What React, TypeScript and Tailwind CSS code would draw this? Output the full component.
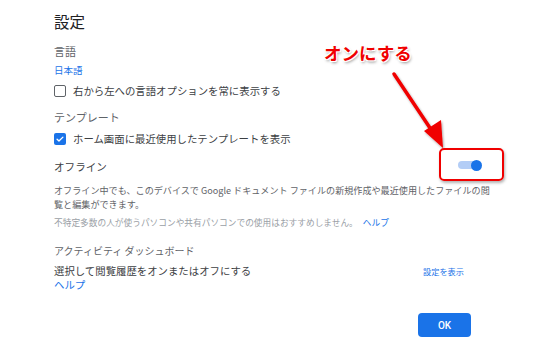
import React from 'react';

function CheckBox({ checked }: { checked: boolean }) {
  if (checked) {
    return (
      <span className="w-[12px] h-[12px] rounded-[2px] bg-[#1a73e8] flex items-center justify-center shrink-0">
        <svg width="10" height="10" viewBox="0 0 24 24" fill="none">
          <path d="M5 12.5l4.5 4.5L19 7.5" stroke="#fff" strokeWidth="3.2" strokeLinecap="round" strokeLinejoin="round" />
        </svg>
      </span>
    );
  }
  return <span className="w-[12px] h-[12px] rounded-[2px] border-[1.6px] border-[#5f6368] shrink-0" />;
}

export default function App() {
  return (
    <div className="relative w-[549px] h-[350px] bg-white overflow-hidden font-['Noto_Sans_CJK_JP','Noto_Sans',sans-serif] text-[#3c4043]">
      <div className="pl-[54px] pt-[11px]">
        <h1 className="text-[15.5px] leading-[20px] text-[#202124]">設定</h1>

        {/* 言語 */}
        <div className="mt-[13px] text-[11px] leading-[14px] text-[#5f6368]">言語</div>
        <div className="mt-[6px] text-[9.5px] leading-[12px] text-[#1a73e8]">日本語</div>
        <div className="mt-[8px] h-[14px] flex items-center gap-[7px]">
          <CheckBox checked={false} />
          <span className="text-[10.4px] leading-[14px] text-[#3c4043] whitespace-nowrap">右から左への言語オプションを常に表示する</span>
        </div>

        {/* テンプレート */}
        <div className="mt-[12px] text-[11px] leading-[14px] text-[#5f6368]">テンプレート</div>
        <div className="mt-[8px] h-[14px] flex items-center gap-[7px]">
          <CheckBox checked={true} />
          <span className="text-[10.4px] leading-[14px] text-[#3c4043] whitespace-nowrap">ホーム画面に最近使用したテンプレートを表示</span>
        </div>

        {/* オフライン */}
        <div className="mt-[13px] h-[16px] w-[428px] flex items-center justify-between">
          <span className="text-[10.6px] leading-[16px] text-[#3c4043]">オフライン</span>
          <span className="relative w-[24px] h-[12px] flex items-center -mt-[4px]">
            <span className="w-[21px] h-[8px] rounded-full bg-[#b3cdf6]" />
            <span className="absolute right-0 w-[11px] h-[11px] rounded-full bg-[#1a73e8]" />
          </span>
        </div>
        <p className="mt-[8px] text-[9.1px] leading-[14px] text-[#5f6368] whitespace-nowrap">
          オフライン中でも、このデバイスで Google ドキュメント ファイルの新規作成や最近使用したファイルの閲
          <br />
          覧と編集ができます。
        </p>
        <p className="mt-[5px] text-[8.7px] leading-[14px] text-[#9aa0a6] whitespace-nowrap">
          不特定多数の人が使うパソコンや共有パソコンでの使用はおすすめしません。
          <span className="ml-[5px] text-[#1a73e8]">ヘルプ</span>
        </p>

        {/* アクティビティ ダッシュボード */}
        <div className="mt-[14px] text-[10px] leading-[14px] text-[#5f6368] whitespace-nowrap">アクティビティ ダッシュボード</div>
        <div className="mt-[6px] w-[410px] flex items-center justify-between">
          <span className="text-[10.4px] leading-[14px] text-[#3c4043] whitespace-nowrap">選択して閲覧履歴をオンまたはオフにする</span>
          <span className="text-[8.2px] leading-[14px] text-[#1a73e8]">設定を表示</span>
        </div>
        <div className="text-[10.4px] leading-[14px] text-[#1a73e8]">ヘルプ</div>

        <div className="mt-[21px] w-[417px] flex justify-end">
          <button className="w-[53px] h-[24px] rounded-[4px] bg-[#1a73e8] text-white text-[10px] font-medium font-['Roboto',sans-serif]">
            OK
          </button>
        </div>
      </div>

      {/* annotation */}
      <div className="absolute left-[324px] top-[42px] text-[17.5px] leading-[22px] font-bold text-[#f00000] whitespace-nowrap [text-shadow:-1px_-1px_0_#fff,1px_-1px_0_#fff,-1px_1px_0_#fff,1px_1px_0_#fff,1px_2px_3px_rgba(0,0,0,0.45)]">
        オンにする
      </div>
      <svg className="absolute left-0 top-0" width="549" height="350" viewBox="0 0 549 350">
        <defs>
          <filter id="sh" x="-20%" y="-20%" width="140%" height="140%">
            <feDropShadow dx="1" dy="1.5" stdDeviation="1.2" floodColor="#000" floodOpacity="0.35" />
          </filter>
        </defs>
        <g filter="url(#sh)">
          <line x1="394" y1="74" x2="434" y2="134" stroke="#f00000" strokeWidth="3.5" strokeLinecap="round" />
          <polygon points="443,148 424,131 441,120" fill="#f00000" />
        </g>
      </svg>
      <div className="absolute left-[439px] top-[148px] w-[65px] h-[33px] rounded-[5px] border-2 border-[#f00000] shadow-[1px_2px_3px_rgba(0,0,0,0.3)]" />
    </div>
  );
}
